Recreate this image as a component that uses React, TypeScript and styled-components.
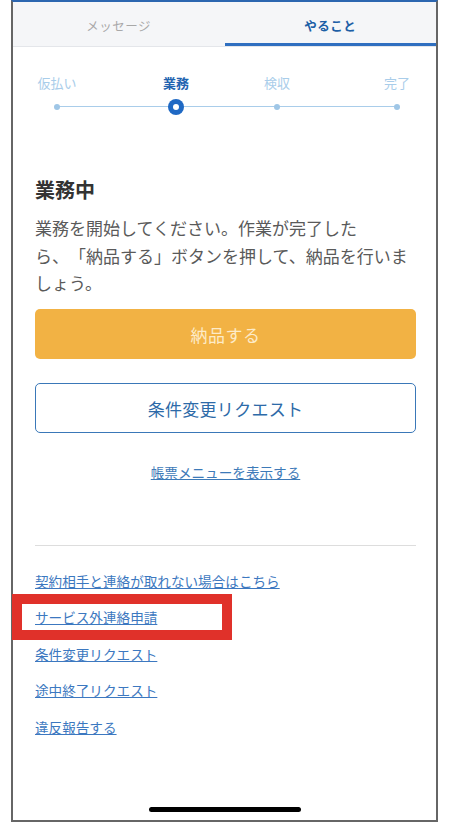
import React from "react";
import styled, { createGlobalStyle } from "styled-components";

const GlobalStyle = createGlobalStyle`
  html, body {
    margin: 0;
    padding: 0;
    background: #ffffff;
  }
  body {
    font-family: "Noto Sans CJK JP", "Noto Sans", sans-serif;
    text-spacing-trim: space-all;
  }
  * { box-sizing: border-box; }
`;

const Frame = styled.div`
  position: relative;
  margin-left: 11px;
  width: 427px;
  height: 822px;
  border: 2px solid #666666;
  border-top-color: #2c66b0;
  display: flex;
  flex-direction: column;
  background: #ffffff;
`;

const TabBar = styled.div`
  display: flex;
  height: 45px;
  background: #f5f6f8;
  border-bottom: 1px solid #e4e6ea;
`;

const Tab = styled.div<{ $active?: boolean }>`
  flex: 1;
  display: flex;
  align-items: center;
  justify-content: center;
  font-size: 12.5px;
  letter-spacing: 0.5px;
  color: ${(p) => (p.$active ? "#1d5fa6" : "#a8a8a8")};
  font-weight: ${(p) => (p.$active ? 700 : 400)};
  box-shadow: ${(p) => (p.$active ? "inset 0 -3px 0 #2f6fc0" : "none")};
  padding-top: 2px;
`;

const Content = styled.div`
  display: flex;
  flex-direction: column;
  padding: 0 20px 0 22px;
  flex: 1;
`;

const Stepper = styled.div`
  position: relative;
  display: grid;
  grid-template-columns: 119px 101px 120px 44px;
  margin-top: 27px;
  &::before {
    content: "";
    position: absolute;
    left: 22px;
    width: 340px;
    top: 32px;
    height: 1px;
    background: #a9cdea;
  }
`;

const Step = styled.div`
  width: 44px;
  display: flex;
  flex-direction: column;
  align-items: center;
  gap: 6px;
`;

const StepLabel = styled.div<{ $active?: boolean }>`
  font-size: 13px;
  line-height: 18px;
  white-space: nowrap;
  color: ${(p) => (p.$active ? "#2264b0" : "#a9cdea")};
  font-weight: ${(p) => (p.$active ? 700 : 400)};
`;

const DotWrap = styled.div`
  position: relative;
  height: 18px;
  width: 18px;
  display: flex;
  align-items: center;
  justify-content: center;
`;

const Dot = styled.div<{ $active?: boolean }>`
  width: ${(p) => (p.$active ? "16px" : "6px")};
  height: ${(p) => (p.$active ? "16px" : "6px")};
  border-radius: 50%;
  background: ${(p) => (p.$active ? "#1f69c4" : "#9fc6e6")};
  display: flex;
  align-items: center;
  justify-content: center;
  &::after {
    content: "";
    display: ${(p) => (p.$active ? "block" : "none")};
    width: 6px;
    height: 6px;
    border-radius: 50%;
    background: #ffffff;
  }
`;

const Heading = styled.h2`
  margin: 60px 0 0;
  font-size: 20px;
  line-height: 28px;
  font-weight: 700;
  color: #333333;
`;

const Body = styled.p`
  margin: 10px 0 0;
  font-size: 17px;
  line-height: 27.5px;
  color: #5a5a5a;
`;

const PrimaryButton = styled.button`
  margin-top: 12.5px;
  height: 50px;
  width: 100%;
  border: none;
  border-radius: 5px;
  background: #f2b244;
  color: #fdebc8;
  font-family: inherit;
  font-size: 17px;
  letter-spacing: 0.5px;
`;

const OutlineButton = styled.button`
  margin-top: 24px;
  height: 50px;
  width: 100%;
  border: 1px solid #3a78b8;
  border-radius: 5px;
  background: #ffffff;
  color: #2d6aa8;
  font-family: inherit;
  font-size: 17px;
  letter-spacing: 0.3px;
`;

const CenterLink = styled.a`
  margin-top: 29px;
  align-self: center;
  font-size: 13.6px;
  line-height: 20px;
  color: #3d7ab8;
  text-decoration: underline;
`;

const Separator = styled.hr`
  margin: 62.5px 0 0;
  border: none;
  height: 1px;
  background: #dddddd;
`;

const LinkList = styled.div`
  display: flex;
  flex-direction: column;
  align-items: flex-start;
  gap: 16.5px;
  margin-top: 25px;
`;

const LinkItem = styled.div`
  position: relative;
`;

const TextLink = styled.a`
  display: block;
  font-size: 13.6px;
  line-height: 20px;
  color: #3c78c0;
  text-decoration: underline;
`;

const Highlight = styled.div`
  position: absolute;
  left: -23px;
  top: -13.5px;
  width: 220px;
  height: 46px;
  border: 10px solid #e0312a;
  pointer-events: none;
`;

const HomeIndicator = styled.div`
  margin: auto auto 8px;
  width: 152px;
  height: 5px;
  border-radius: 3px;
  background: #000000;
`;

const steps = [
  { label: "仮払い" },
  { label: "業務", active: true },
  { label: "検収" },
  { label: "完了" },
];

export default function App() {
  return (
    <>
      <GlobalStyle />
      <Frame>
        <TabBar>
          <Tab>メッセージ</Tab>
          <Tab $active>やること</Tab>
        </TabBar>
        <Content>
          <Stepper>
            {steps.map((s) => (
              <Step key={s.label}>
                <StepLabel $active={s.active}>{s.label}</StepLabel>
                <DotWrap>
                  <Dot $active={s.active} />
                </DotWrap>
              </Step>
            ))}
          </Stepper>
          <Heading>業務中</Heading>
          <Body>
            業務を開始してください。作業が完了した
            <br />
            ら、「納品する」ボタンを押して、納品を行いましょう。
          </Body>
          <PrimaryButton>納品する</PrimaryButton>
          <OutlineButton>条件変更リクエスト</OutlineButton>
          <CenterLink>帳票メニューを表示する</CenterLink>
          <Separator />
          <LinkList>
            <LinkItem>
              <TextLink>契約相手と連絡が取れない場合はこちら</TextLink>
            </LinkItem>
            <LinkItem>
              <TextLink>サービス外連絡申請</TextLink>
              <Highlight />
            </LinkItem>
            <LinkItem>
              <TextLink>条件変更リクエスト</TextLink>
            </LinkItem>
            <LinkItem>
              <TextLink>途中終了リクエスト</TextLink>
            </LinkItem>
            <LinkItem>
              <TextLink>違反報告する</TextLink>
            </LinkItem>
          </LinkList>
        </Content>
        <HomeIndicator />
      </Frame>
    </>
  );
}
